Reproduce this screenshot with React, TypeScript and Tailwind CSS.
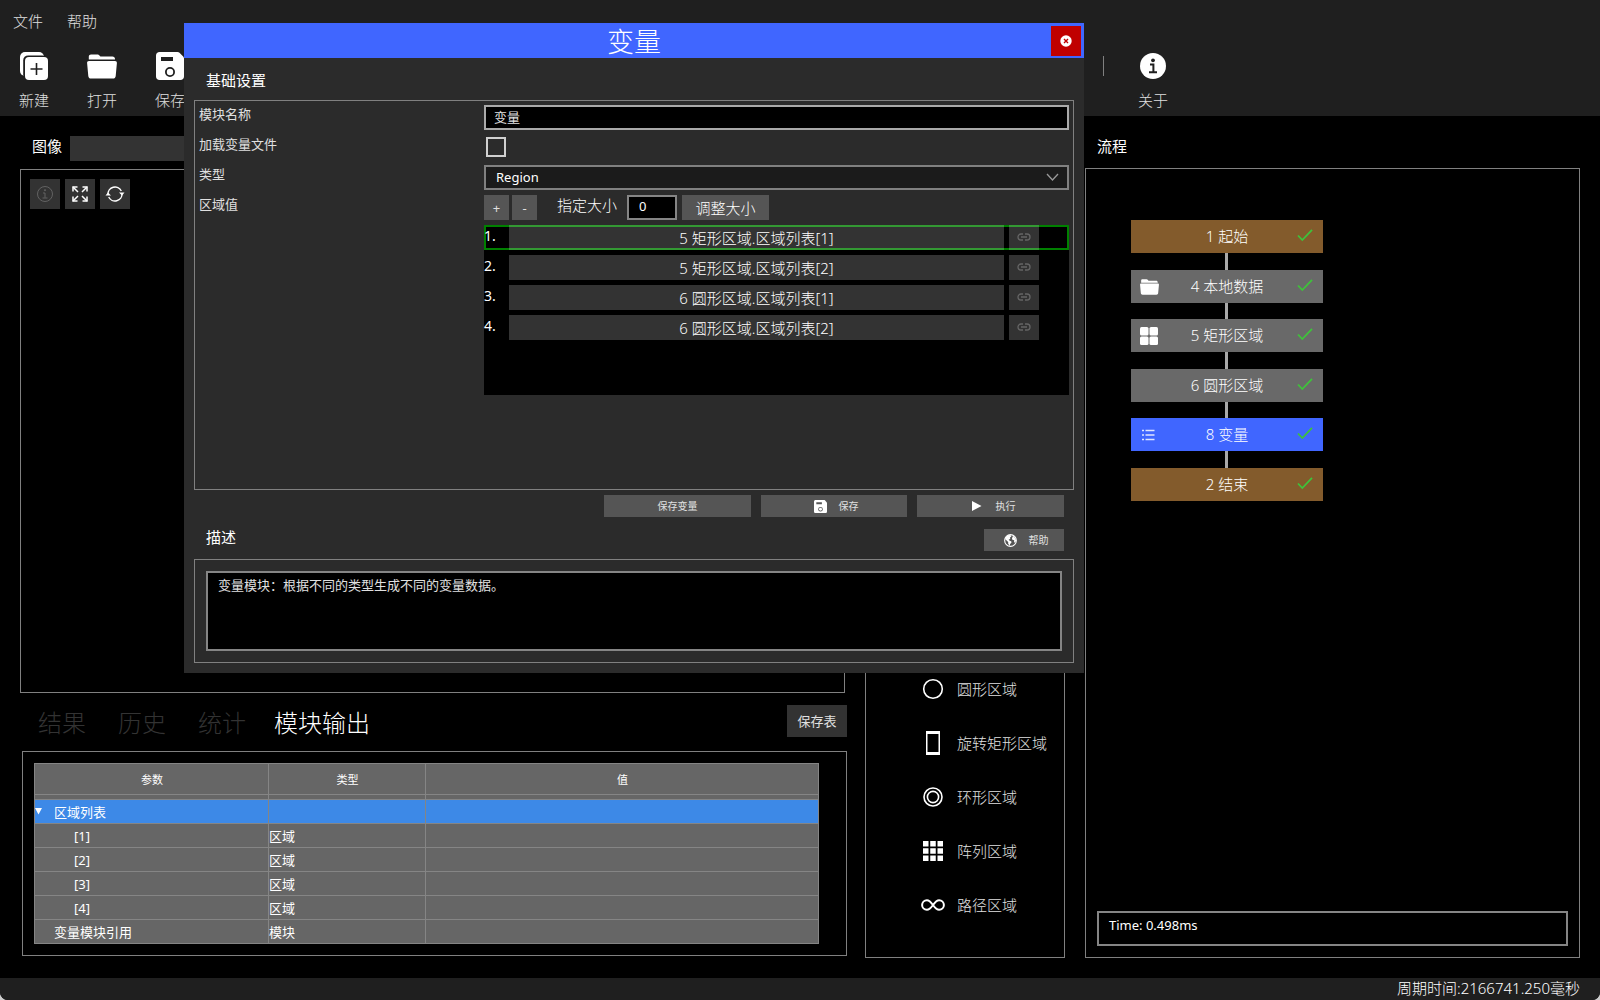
import { Fragment, type ReactNode } from "react";

function NewIcon() {
  return (
    <svg width="28" height="28" viewBox="0 0 28 28" aria-hidden="true">
      <rect width="24" height="24" rx="5" fill="#fff" />
      <rect x="3.2" y="3.4" width="24" height="24" rx="5" fill="#1f1f1f" />
      <rect x="5" y="5" width="23" height="23" rx="4" fill="#fff" />
      <path d="M16.5 11v12M10.5 17h12" stroke="#1f1f1f" strokeWidth="1.6" />
    </svg>
  );
}

function FolderIcon({ className }: { className?: string }) {
  return (
    <svg className={className} viewBox="0 0 30 25" fill="#fff" aria-hidden="true">
      <path d="M1.8 5V2.6C1.8 1.2 2.8.4 4 .4h6.3c1 0 1.6.4 2.2 1.1l.9 1h12c1.6 0 2.6 1 2.6 2.5v.6H1.8z" />
      <path d="M2 6.9h26c1.3 0 2 .9 1.9 2l-1.2 13c-.1 1.6-1.2 2.7-2.8 2.7H4.1c-1.6 0-2.7-1.1-2.8-2.7L.1 8.9c-.1-1.1.6-2 1.9-2z" />
    </svg>
  );
}

function SaveIcon({ className }: { className?: string }) {
  return (
    <svg className={className} viewBox="0 0 28 28" fill="#fff" aria-hidden="true">
      <path
        fillRule="evenodd"
        d="M3.5 0h18c.8 0 1.5.3 2 .8l3.7 3.8c.5.5.8 1.2.8 2v17.9c0 2-1.5 3.5-3.5 3.5h-21C1.500 28 0 26.500 0 24.500v-21C0 1.500 1.500 0 3.500 0zM5 5v4h12V5zM14 15a5 5 0 1 0 0 10a5 5 0 1 0 0-10z"
      />
      <circle cx="14" cy="20" r="3.2" />
    </svg>
  );
}

function AboutIcon() {
  return (
    <svg width="26" height="26" viewBox="0 0 26 26" aria-hidden="true">
      <circle cx="13" cy="13" r="13" fill="#fff" />
      <circle cx="13" cy="7.300" r="1.900" fill="#1f1f1f" />
      <path d="M10 11.500h3.400v7.500M9 19.200h8" stroke="#1f1f1f" strokeWidth="2" fill="none" />
    </svg>
  );
}

function CloseIcon() {
  return (
    <svg width="12" height="12" viewBox="0 0 12 12" aria-hidden="true">
      <circle cx="6" cy="6" r="5.700" fill="#fff" />
      <path d="M4 4l4 4M8 4l-4 4" stroke="#c00000" strokeWidth="1.400" />
    </svg>
  );
}

function InfoIcon() {
  return (
    <svg width="18" height="18" viewBox="0 0 18 18" fill="none" stroke="#626262" aria-hidden="true">
      <circle cx="9" cy="9" r="7.500" />
      <path d="M7 8h2v4.700M6.500 13h5" />
      <circle cx="9" cy="5.200" r=".6" fill="#626262" />
    </svg>
  );
}

function ExpandIcon() {
  return (
    <svg width="18" height="18" viewBox="0 0 18 18" fill="none" stroke="#fff" strokeWidth="1.500" aria-hidden="true">
      <path d="M2 6.500V2h4.500M11.500 2H16v4.500M16 11.500V16h-4.500M6.500 16H2v-4.500" />
      <path d="M2 2l5 5M16 2l-5 5M16 16l-5-5M2 16l5-5" />
    </svg>
  );
}

function RefreshIcon() {
  return (
    <svg width="20" height="18" viewBox="0 0 20 18" fill="none" stroke="#fff" strokeWidth="1.400" aria-hidden="true">
      <path d="M3 9.500A7 7 0 0 1 16.300 6M17 8.500A7 7 0 0 1 3.700 12" />
      <path d="M.5 10.500L3 7.500l3 3zM14 7.500l3 3 2.500-3z" fill="#fff" stroke="none" />
    </svg>
  );
}

function LinkIcon() {
  return (
    <svg width="14" height="8" viewBox="0 0 14 8" fill="none" stroke="#666" strokeWidth="1.300" aria-hidden="true">
      <path d="M6 1H4a3 3 0 0 0 0 6h2M8 1h2a3 3 0 0 1 0 6H8M4 4h6" />
    </svg>
  );
}

function GlobeIcon() {
  return (
    <svg width="13" height="13" viewBox="0 0 14 14" aria-hidden="true">
      <circle cx="7" cy="7" r="6.300" fill="none" stroke="#fff" strokeWidth="1.200" />
      <path
        d="M1.200 5.500C1.500 3 3.600 1 6.800 1L8 2.300 6.300 4l.5 1.200L5 6.200l1.500 1.300 1.300.2.200 1.800-1.500 1.300-.3 2-1.700-2.200V8.700L2.800 7zM9.800 2l2.500 2.500.7 2.800-1.200 2.400-1-1.400.2-1.600-2-.5-.4-1.500z"
        fill="#fff"
      />
    </svg>
  );
}

function CheckIcon() {
  return (
    <svg width="16" height="13" viewBox="0 0 16 13" fill="none" stroke="#3ec23a" strokeWidth="1.800" aria-hidden="true">
      <path d="M1 6.500L5.300 11 15 .8" />
    </svg>
  );
}

function TilesIcon() {
  return (
    <svg width="18" height="18" viewBox="0 0 18 18" fill="#fff" aria-hidden="true">
      <rect width="8.500" height="8.500" rx="1.500" />
      <rect x="9.500" width="8.500" height="8.500" rx="1.500" />
      <rect y="9.500" width="8.500" height="8.500" rx="1.500" />
      <rect x="9.500" y="9.500" width="8.500" height="8.500" rx="1.500" />
    </svg>
  );
}

function ListIcon() {
  return (
    <svg width="18" height="12" viewBox="0 0 18 12" stroke="#dfe5ff" strokeWidth="1.500" aria-hidden="true">
      <path d="M2 1.500h2M5.500 1.500h9M2 6h2M5.500 6h9M2 10.500h2M5.500 10.500h9" />
    </svg>
  );
}

const regionIcons: Record<string, ReactNode> = {
  circle: <circle cx="12" cy="12" r="9.300" fill="none" stroke="#fff" strokeWidth="1.600" />,
  rect: <path fillRule="evenodd" d="M5 0h14v24H5zM6.500 3v18h11V3z" fill="#fff" />,
  ring: (
    <g fill="none" stroke="#fff" strokeWidth="1.600">
      <circle cx="12" cy="12" r="9" />
      <circle cx="12" cy="12" r="5.600" />
    </g>
  ),
  array: (
    <path
      d="M2 2h5.500v5.500H2zM9.250 2h5.500v5.500h-5.500zM16.500 2H22v5.500h-5.500zM2 9.250h5.500v5.500H2zM9.250 9.250h5.500v5.500h-5.500zM16.500 9.250H22v5.500h-5.500zM2 16.500h5.500V22H2zM9.250 16.500h5.500V22h-5.500zM16.500 16.500H22V22h-5.500z"
      fill="#fff"
    />
  ),
  path: (
    <path
      d="M12 12C10 9.200 8.300 7.200 5.900 7.200a4.800 4.800 0 0 0 0 9.600C8.300 16.800 10 14.800 12 12s3.700-4.800 6.100-4.800a4.800 4.800 0 0 1 0 9.600C15.700 16.800 14 14.800 12 12z"
      fill="none"
      stroke="#fff"
      strokeWidth="2"
    />
  ),
};

const regions = [
  { icon: "circle", name: "圆形区域" },
  { icon: "rect", name: "旋转矩形区域" },
  { icon: "ring", name: "环形区域" },
  { icon: "array", name: "阵列区域" },
  { icon: "path", name: "路径区域" },
];

const nodes: { name: string; color: string; link: string; icon?: ReactNode }[] = [
  { name: "1 起始", color: "bg-[#835b2c]", link: "h-[17px]" },
  { name: "4 本地数据", color: "bg-[#696969]", link: "h-4", icon: <FolderIcon className="h-4 w-[19px]" /> },
  { name: "5 矩形区域", color: "bg-[#696969]", link: "h-[17px]", icon: <TilesIcon /> },
  { name: "6 圆形区域", color: "bg-[#696969]", link: "h-4" },
  { name: "8 变量", color: "bg-[#4066ff]", link: "h-[17px]", icon: <ListIcon /> },
  { name: "2 结束", color: "bg-[#835b2c]", link: "" },
];

const values = ["5 矩形区域.区域列表[1]", "5 矩形区域.区域列表[2]", "6 圆形区域.区域列表[1]", "6 圆形区域.区域列表[2]"];

function ToolButton({ icon, label }: { icon: ReactNode; label: string }) {
  return (
    <button className="flex w-[68px] flex-col items-center gap-2.5">
      <span className="flex h-7 items-center">{icon}</span>
      <span className="text-[15px] leading-5 font-light">{label}</span>
    </button>
  );
}

function Header() {
  return (
    <header className="h-[116px] bg-[#1f1f1f]">
      <nav className="flex gap-6 px-[13px] pt-[11px] text-[15px] leading-5 font-light">
        <button>文件</button>
        <button>帮助</button>
      </nav>
      <div className="flex pt-[21px]">
        <ToolButton icon={<NewIcon />} label="新建" />
        <ToolButton icon={<FolderIcon className="h-[25px] w-[30px]" />} label="打开" />
        <ToolButton icon={<SaveIcon className="size-7" />} label="保存" />
        <div className="ml-auto flex w-[497px]">
          <span className="mt-1 h-5 w-px bg-[#808080]" />
          <div className="ml-[15px]">
            <ToolButton icon={<AboutIcon />} label="关于" />
          </div>
        </div>
      </div>
    </header>
  );
}

function OutputTable() {
  const cell = "h-6 border border-[#858585] p-0";
  const head = "h-[31px] border border-[#858585] p-0 pt-px pl-px text-center font-normal";
  return (
    <table className="w-full table-fixed border-collapse bg-[#666] text-left text-[13px] leading-4 text-white">
      <colgroup>
        <col className="w-[234px]" />
        <col className="w-[157px]" />
        <col />
      </colgroup>
      <thead>
        <tr className="text-[11px]">
          <th className={head}>参数</th>
          <th className={head}>类型</th>
          <th className={head}>值</th>
        </tr>
      </thead>
      <tbody>
        <tr aria-hidden="true">
          <td className="h-[5px] border border-[#858585] p-0" />
          <td className="border border-[#858585] p-0" />
          <td className="border border-[#858585] p-0" />
        </tr>
        <tr className="bg-[#3d89e7]">
          <td className={cell}>
            <button className="flex items-center gap-3" aria-expanded="true">
              <svg width="7" height="7" viewBox="0 0 7 7" fill="#fff" aria-hidden="true">
                <path d="M0 0h7L3.500 6.500z" />
              </svg>
              区域列表
            </button>
          </td>
          <td className={cell} />
          <td className={cell} />
        </tr>
        {["[1]", "[2]", "[3]", "[4]"].map((name) => (
          <tr key={name}>
            <td className="h-6 border border-[#858585] p-0 pl-[39px]">{name}</td>
            <td className={cell}>区域</td>
            <td className={cell} />
          </tr>
        ))}
        <tr>
          <td className="h-6 border border-[#858585] p-0 pl-[19px]">变量模块引用</td>
          <td className={cell}>模块</td>
          <td className={cell} />
        </tr>
      </tbody>
    </table>
  );
}

function ImageArea() {
  const small = "flex size-[30px] items-center justify-center bg-[#333]";
  return (
    <section className="flex min-w-0 flex-1 flex-col pt-5 pb-[22px] pl-5">
      <div className="flex items-start gap-2 pl-3">
        <label htmlFor="image" className="text-[15px] leading-5 text-white">
          图像
        </label>
        <select id="image" className="h-[25px] flex-1 appearance-none bg-[#333]" />
      </div>
      <div className="mt-2 mr-0.5 flex flex-1 gap-[5px] border border-[#808080] p-[9px]">
        <button className={small} aria-label="信息" disabled>
          <InfoIcon />
        </button>
        <button className={small} aria-label="适应窗口">
          <ExpandIcon />
        </button>
        <button className={small} aria-label="刷新">
          <RefreshIcon />
        </button>
      </div>
      <div className="mt-3 flex h-8 pl-[18px]">
        <div className="flex gap-8 pt-0.5 text-[24px] leading-8 font-light text-[#333]" role="tablist">
          <button role="tab">结果</button>
          <button role="tab">历史</button>
          <button role="tab">统计</button>
          <button role="tab" aria-selected="true" className="-ml-1 text-white">
            模块输出
          </button>
        </div>
        <button className="ml-auto h-8 w-[60px] bg-[#333] text-[13px] leading-4">保存表</button>
      </div>
      <div className="mt-3.5 ml-0.5 border border-[#808080] py-[11px] pr-[27px] pl-[11px]">
        <OutputTable />
      </div>
    </section>
  );
}

function RegionTools() {
  return (
    <section className="flex w-[200px] flex-col pt-[52px] pb-5">
      <div className="flex flex-1 flex-col justify-end border border-[#808080] pb-[25px] pl-[55px]">
        {regions.map((r) => (
          <button key={r.name} className="flex h-[54px] items-center gap-3 text-[15px] font-light">
            <svg width="24" height="24" viewBox="0 0 24 24" aria-hidden="true">
              {regionIcons[r.icon]}
            </svg>
            {r.name}
          </button>
        ))}
      </div>
    </section>
  );
}

function Flow() {
  return (
    <section className="flex w-[495px] flex-col pt-5 pb-5">
      <h2 className="pl-3 text-[15px] leading-5 text-white">流程</h2>
      <div className="mt-3 flex flex-1 flex-col border border-[#808080] px-[11px] pt-[51px] pb-[11px]">
        <div className="ml-[34px] flex w-48 flex-col items-center">
          {nodes.map((n) => (
            <Fragment key={n.name}>
              <button
                className={`grid h-[33px] w-full grid-cols-[36px_1fr_36px] items-center text-[15px] font-light text-white ${n.color}`}
              >
                <span className="flex justify-center">{n.icon}</span>
                <span>{n.name}</span>
                <span className="flex justify-center pr-px pb-0.5">
                  <CheckIcon />
                </span>
              </button>
              {n.link && <span className={`mr-px w-[3px] bg-[#a9a9a9] ${n.link}`} />}
            </Fragment>
          ))}
        </div>
        <output className="mt-auto h-[35px] border-2 border-[#858585] px-2.5 pt-0.5 text-[13px] leading-5 text-white">
          Time: 0.498ms
        </output>
      </div>
    </section>
  );
}

function VariableDialog() {
  const action = "flex h-[22px] items-center justify-center bg-[#555] text-[10px] leading-4";
  return (
    <div
      role="dialog"
      aria-labelledby="dialog-title"
      className="absolute top-[23px] left-[184px] flex h-[650px] w-[900px] flex-col bg-[#2b2b2b]"
    >
      <div className="grid h-[35px] grid-cols-[33px_1fr_33px] items-center bg-[#4066ff]">
        <h1 id="dialog-title" className="col-start-2 pt-0.5 text-center text-[27px] leading-[33px] font-light text-white">
          变量
        </h1>
        <button className="flex size-[30px] items-center justify-center bg-[#c00000]" aria-label="关闭">
          <CloseIcon />
        </button>
      </div>

      <div className="flex flex-1 flex-col px-2.5 pb-2.5">
        <h2 className="mt-3 mb-2.5 pl-3 text-[15px] leading-5 text-white">基础设置</h2>
        <div className="grid h-[390px] grid-cols-[285px_1fr] content-start gap-y-[5px] border border-[#808080] py-1 pr-1 pl-1 text-[13px] leading-[18px]">
          <label htmlFor="name">模块名称</label>
          <input id="name" defaultValue="变量" className="h-[25px] w-full border-2 border-[#aaa] bg-black px-2 pb-0.5" />

          <label htmlFor="load">加载变量文件</label>
          <div className="flex h-[25px] items-start pt-0.5 pl-0.5">
            <input id="load" type="checkbox" className="size-5 appearance-none border-2 border-[#d0d0d0]" />
          </div>

          <label htmlFor="type">类型</label>
          <div className="relative h-[25px]">
            <select
              id="type"
              className="block h-[25px] w-full appearance-none border-2 border-[#808080] bg-[#1b1b1b] px-2.5 pb-0.5 text-white"
            >
              <option>Region</option>
            </select>
            <svg
              className="pointer-events-none absolute top-2 right-2.5"
              width="13"
              height="9"
              viewBox="0 0 13 9"
              fill="none"
              stroke="#999"
              strokeWidth="1.300"
              aria-hidden="true"
            >
              <path d="M1 1l5.500 6L12 1" />
            </svg>
          </div>

          <span>区域值</span>
          <div>
            <div className="flex h-[25px] text-[15px]">
              <button className="mr-[3px] w-[25px] bg-[#555] text-[13px]">+</button>
              <button className="mr-5 w-[25px] bg-[#555] text-[13px]">-</button>
              <label htmlFor="size" className="mr-[10px] leading-5 font-light text-white">
                指定大小
              </label>
              <input
                id="size"
                defaultValue="0"
                className="mr-[5px] w-[50px] border-2 border-[#858585] bg-black px-2.5 pb-1 text-[13px] text-white"
              />
              <button className="w-[87px] bg-[#555] font-light text-white">调整大小</button>
            </div>
            <ol className="mt-[5px] flex h-[170px] flex-col gap-[5px] bg-black text-white">
              {values.map((v, i) => (
                <li key={v} className="relative flex h-[25px] text-[15px]">
                  {i === 0 && <span className="absolute inset-0 border-2 border-[#008000]" />}
                  <span className="relative w-[25px] text-[14px] leading-[22px]">{i + 1}.</span>
                  <button className="relative mr-[5px] flex-1 bg-white/20 font-light">{v}</button>
                  <button
                    className="relative mr-[30px] flex w-[30px] items-center justify-center bg-white/20 pb-px"
                    aria-label="链接"
                  >
                    <LinkIcon />
                  </button>
                </li>
              ))}
            </ol>
          </div>
        </div>

        <div className="mt-[5px] flex justify-end gap-2.5 pr-2.5">
          <button className={`w-[147px] ${action}`}>保存变量</button>
          <button className={`w-[146px] gap-3 pl-1 ${action}`}>
            <SaveIcon className="size-[13px]" />
            保存
          </button>
          <button className={`w-[147px] gap-3.5 pl-1.5 ${action}`}>
            <svg width="10" height="10" viewBox="0 0 10 10" fill="#fff" aria-hidden="true">
              <path d="M0 0l9.500 5L0 10z" />
            </svg>
            执行
          </button>
        </div>

        <div className="mt-3 flex h-[22px] justify-between pr-2.5 pl-3">
          <h2 className="text-[15px] leading-4 text-white">描述</h2>
          <button className={`w-20 gap-3 pl-1 ${action}`}>
            <GlobeIcon />
            帮助
          </button>
        </div>
        <div className="mt-2 flex flex-1 border border-[#808080] p-[11px]">
          <textarea
            readOnly
            aria-label="描述"
            value="变量模块：根据不同的类型生成不同的变量数据。"
            className="w-full resize-none border-2 border-[#858585] bg-black px-2.5 pt-0.5 text-[13px] leading-5"
          />
        </div>
      </div>
    </div>
  );
}

export default function App() {
  return (
    <div className="min-h-screen bg-[#ccc] font-['Noto_Sans','Noto_Sans_CJK_SC',sans-serif] text-[#e0e0e0]">
      <div className="relative flex min-h-screen flex-col overflow-hidden rounded-b-lg bg-black">
        <Header />
        <main className="flex flex-1 pr-5">
          <ImageArea />
          <div className="ml-[18px] flex gap-5">
            <RegionTools />
            <Flow />
          </div>
        </main>
        <footer className="h-[22px] bg-[#1f1f1f] pr-5 text-right text-[15px] leading-5 font-light text-white">
          周期时间:2166741.250毫秒
        </footer>
        <VariableDialog />
      </div>
    </div>
  );
}
